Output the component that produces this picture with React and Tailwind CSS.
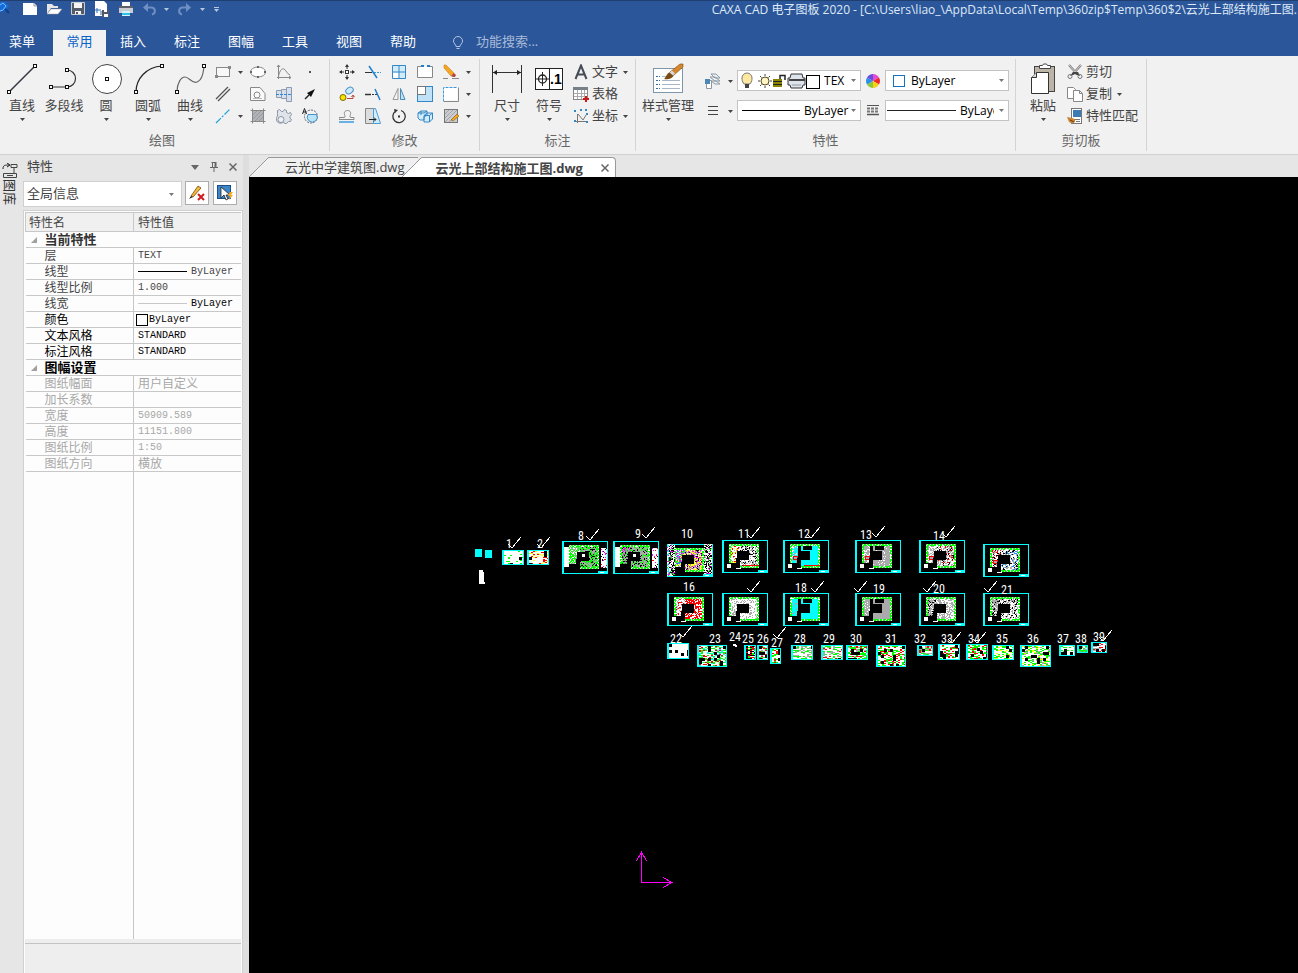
import React from 'react';

const uiFont = 'font-["Open_Sans","Noto_Sans_CJK_SC",sans-serif]';

/* ---------- Icons ---------- */

const Caret = ({ className = 'text-[#444]' }) => (
  <svg viewBox="0 0 5 3" className={`h-[3px] w-[5px] shrink-0 ${className}`} fill="currentColor" aria-hidden="true">
    <path d="M0 0h5L2.5 3z" />
  </svg>
);

const Icon = ({ children, className = 'size-4' }) => (
  <svg viewBox="0 0 16 16" fill="none" className={`shrink-0 ${className}`} aria-hidden="true">
    {children}
  </svg>
);

const BigIcon = ({ children }) => (
  <svg viewBox="0 0 32 32" fill="none" className="size-8 shrink-0" aria-hidden="true">
    {children}
  </svg>
);

const Node = ({ x, y }) => (
  <rect x={x - 1.5} y={y - 1.5} width="3" height="3" fill="#fff" stroke="#111" />
);

const big = {
  line: (
    <BigIcon>
      <path d="M3 29 29 3" stroke="#3c3c48" strokeWidth="1.6" />
      <Node x={3} y={29} />
      <Node x={29} y={3} />
    </BigIcon>
  ),
  polyline: (
    <BigIcon>
      <path d="M3 24h16a8.5 8.5 0 0 0 0-17" stroke="#333" strokeWidth="1.2" />
      <Node x={19} y={7} />
      <Node x={3} y={24} />
      <Node x={19} y={24} />
    </BigIcon>
  ),
  circle: (
    <BigIcon>
      <circle cx="17" cy="16" r="14.5" fill="#fff" stroke="#444" />
      <Node x={17} y={16} />
    </BigIcon>
  ),
  arc: (
    <BigIcon>
      <path d="M4 29C4 16 14 4 30 3" stroke="#222" strokeWidth="1.2" />
      <Node x={4} y={29} />
      <Node x={30} y={3} />
    </BigIcon>
  ),
  spline: (
    <BigIcon>
      <path d="M3 29C3 20 7 14 11 14s7 7 12 5 6-8 7-15" stroke="#666" strokeWidth="1.2" />
      <Node x={3} y={29} />
      <Node x={30} y={3} />
    </BigIcon>
  ),
  dimension: (
    <BigIcon>
      <path d="M1.500 2v28M30.500 2v28M2 9.500h28" stroke="#333" />
      <path d="M2 9.500l4-2.500v5zM30 9.500 26 7v5z" fill="#222" />
    </BigIcon>
  ),
  symbol: (
    <BigIcon>
      <rect x="2.500" y="5.500" width="27" height="21" fill="#fff" stroke="#222" />
      <path d="M16.500 5v22M3 16h13M9.500 9v14" stroke="#222" />
      <circle cx="9.500" cy="16" r="4" stroke="#222" strokeWidth="1.300" />
      <text x="17" y="21" className="font-['Liberation_Sans',sans-serif] text-[14px] font-bold" fill="#000">
        .1
      </text>
    </BigIcon>
  ),
  style: (
    <BigIcon>
      <rect x="1.500" y="5.500" width="29" height="24" fill="#fff" stroke="#7e96aa" />
      <path d="M4 13.500h4M4 17.500h4M4 21.500h4M4 25.500h4" stroke="#3a6ea5" strokeDasharray="2 1" />
      <path d="M10 13.500h6M10 17.500h18M10 21.500h18M10 25.500h18" stroke="#a9b6c6" />
      <path d="M12 16c2-1 2-5 6-7l4 3c-2 4-6 5-10 4z" fill="#7b4a14" />
      <path d="M18 9 28 1h3v3L22 12z" fill="#d9862a" stroke="#7b4a14" strokeWidth=".6" />
      <path d="M17.500 9.500l2.500-2 3 3-2 2z" fill="#d8d8d8" />
    </BigIcon>
  ),
  paste: (
    <BigIcon>
      <rect x="7.500" y="3.500" width="20" height="25" fill="#bdb4a8" stroke="#444" />
      <path d="M12.500 5.500v-3h3l1-1.500h3l1 1.500h3v3z" fill="#fff" stroke="#444" />
      <path d="M9.500 9.500h12v21h-17v-16z" fill="#fff" stroke="#333" />
      <path d="M9.500 9.500v5h-5" fill="#d8d8d8" stroke="#333" />
    </BigIcon>
  ),
};

const small = {
  rect: (
    <Icon>
      <rect x="1.500" y="3.500" width="13" height="9" fill="#f8f8f8" stroke="#888" />
      <path d="M0 11h3v3H0zM13 2h3v3h-3z" fill="#888" />
    </Icon>
  ),
  parallel: (
    <Icon>
      <path d="M1 13 13 1M3 15 15 3" stroke="#555" strokeWidth="1.300" />
    </Icon>
  ),
  centerLine: (
    <Icon>
      <path d="M1 15 15 1" stroke="#1fa3dc" strokeWidth="1.200" strokeDasharray="7 1.500 2 1.500" />
    </Icon>
  ),
  ellipse: (
    <Icon>
      <ellipse cx="8" cy="8" rx="7.500" ry="5" fill="#fff" stroke="#888" />
      <path d="M7 2h2v2H7zM7 12h2v2H7zM0 7h2v2H0zM14 7h2v2h-2z" fill="#666" />
    </Icon>
  ),
  profile: (
    <Icon>
      <path d="M1 1.500h9l5 6v7H.500v-13z" stroke="#888" fill="#fafafa" />
      <circle cx="7" cy="9" r="3" stroke="#888" />
      <path d="M3 12.500h9" stroke="#bbb" />
    </Icon>
  ),
  hatch: (
    <Icon>
      <rect x="3" y="3" width="10" height="10" fill="#b0b3b8" />
      <path d="M3 7l4-4M3 11l8-8M5 13l8-8M9 13l4-4" stroke="#999" />
      <path d="M.500 2.500h15M.500 13.500h15M2.500.500v15M13.500.500v15" stroke="#888" />
    </Icon>
  ),
  formula: (
    <Icon>
      <path d="M2.500 1v14M1 13.500h14" stroke="#888" />
      <path d="M2.500 12C4 6 6 4 8 5s3 5 6 6" stroke="#888" />
      <path d="M1 3l1.500-2L4 3M13 12l2 1.500-2 1.500" stroke="#888" />
    </Icon>
  ),
  shaft: (
    <Icon>
      <path d="M.500 4.500h5v7h-5zM5.500 3.500h5v9h-5zM10.500 1.500h5v14h-5z" fill="#d6dfec" stroke="#8d9bb0" />
      <path d="M0 8.500h16" stroke="#2f8ad8" strokeDasharray="3 1" />
    </Icon>
  ),
  gear: (
    <Icon>
      <path
        d="M1.500 5.500v-3l2-1 2 2 1.500 0 1.500-2 2 1v2l2 1 2-1 1 2-1.500 2v2l1.500 1-1 2-2 0-2 2h-2l-1-1.500A4 4 0 1 1 1.500 8z"
        fill="#dfe3ea"
        stroke="#8b95a5"
      />
      <circle cx="5" cy="11.500" r="3" fill="#f1f1f1" stroke="#8b95a5" />
    </Icon>
  ),
  point: (
    <Icon>
      <path d="M7 7h2v2H7z" fill="#555" />
    </Icon>
  ),
  arrow: (
    <Icon>
      <path d="M3 13l4-4" stroke="#222" strokeWidth="1.500" />
      <path d="M13 3 5 7l4 4z" fill="#111" />
    </Icon>
  ),
  detail: (
    <Icon>
      <circle cx="9" cy="8.500" r="6.500" stroke="#667" strokeDasharray="2 1" />
      <path d="M6 6.500h8.500a5 5 0 1 1-8.500 0z" fill="#b9e3fa" stroke="#4a90c2" />
      <path d="M.500 6 2.500.500 4.500 6M1.200 4h2.600" stroke="#222" />
    </Icon>
  ),
  move: (
    <Icon>
      <path d="M8 1v4M8 11v4M1 8h4M11 8h4" stroke="#333" />
      <path d="M8 0l2 3H6zM8 16l2-3H6zM0 8l3-2v4zM16 8l-3-2v4z" fill="#333" />
      <rect x="6.500" y="6.500" width="3" height="3" fill="#fff" stroke="#333" />
    </Icon>
  ),
  copy: (
    <Icon>
      <ellipse cx="10.500" cy="4.500" rx="4" ry="3" fill="#cdeafc" stroke="#4a90c2" transform="rotate(-35 10.500 4.500)" />
      <circle cx="4" cy="11.500" r="3" fill="#f5e400" stroke="#7a6b00" />
      <path d="M8 12.500h6V10M12.500 11l1.500-2 1.500 2" stroke="#b5483a" />
    </Icon>
  ),
  offset: (
    <Icon>
      <path d="M0 9.500h5c1.500 0 1-1.500.500-3s0-4 3-4 3.500 2.500 3 4-1 3 .500 3h3v2H0z" fill="#f4f4f4" stroke="#888" />
      <path d="M0 14h15" stroke="#3a9bdc" strokeWidth="1.500" />
    </Icon>
  ),
  trim: (
    <Icon>
      <path d="M0 8.500h7" stroke="#333" />
      <path d="M9 8.500h7" stroke="#3a9bdc" strokeDasharray="2 1" />
      <path d="M4 2l8 12" stroke="#1f7fd0" strokeWidth="1.500" />
    </Icon>
  ),
  extend: (
    <Icon>
      <path d="M0 8.500h6" stroke="#333" strokeWidth="1.500" />
      <path d="M7 8.500h5" stroke="#333" strokeDasharray="2 1" />
      <path d="M10 3l5 11" stroke="#1f7fd0" strokeWidth="1.500" />
    </Icon>
  ),
  stretch: (
    <Icon>
      <path d="M.500.500h8v15h-8z" fill="#ddd" stroke="#888" />
      <path d="M8.500.500h2l5 15h-7z" fill="#d3ecfb" stroke="#4a9fd8" />
      <path d="M4 11.500h7M9 9.500l2 2-2 2" stroke="#222" />
    </Icon>
  ),
  array: (
    <Icon>
      <path d="M1.500 1.500h13v13h-13z" fill="#d3ecfb" />
      <path d="M1.500 8.500h6v6h-6z" fill="#fff" />
      <path d="M1.500 1.500h13v13h-13zM8 1v14M1 8h14" stroke="#3487c4" />
    </Icon>
  ),
  mirror: (
    <Icon>
      <path d="M7 2.500v11H2z" stroke="#999" fill="#f5f5f5" />
      <path d="M9.500 2.500v11H14z" stroke="#4a8ab5" fill="#bfe2f8" />
    </Icon>
  ),
  rotate: (
    <Icon>
      <path d="M10 2.500A6.200 6.200 0 1 1 4.500 3.300" stroke="#333" strokeWidth="1.300" />
      <path d="M3 1l4 1-3 3z" fill="#333" />
      <path d="M7 7.500h2v2H7z" fill="#333" />
    </Icon>
  ),
  breakLine: (
    <Icon>
      <path d="M5 2.500H.500v11h15v-11H11" fill="#fff" stroke="#888" />
      <path d="M4 1h3v2H4zM10 1h3v2h-3z" fill="#1f7fd0" />
    </Icon>
  ),
  scale: (
    <Icon>
      <rect x=".500" y=".500" width="15" height="15" fill="#bfe2f8" stroke="#3487c4" />
      <rect x=".500" y=".500" width="8" height="8" fill="#fff" stroke="#777" />
    </Icon>
  ),
  explode: (
    <Icon>
      <path d="M1 5l3-2h6v4l-3 2v3H3L1 10zM7 7.500l3-2.500h5.500v6l-3 3H7z" fill="#d3ecfb" stroke="#3487c4" />
      <path d="M1 5h6l3-2M7 7.500h5.500l3-2.500M12.500 7.500v6.500M4 3v4" stroke="#3487c4" />
    </Icon>
  ),
  pencil: (
    <Icon>
      <path d="M1 1l2 0 8 8-3 3-7-8z" fill="#f5a623" stroke="#b87412" strokeWidth=".5" />
      <path d="M11 9l2 2-1 2-2 0-2-1z" fill="#b5483a" />
      <path d="M0 14.500h5M9 14.500h7" stroke="#888" />
    </Icon>
  ),
  region: (
    <Icon>
      <rect x=".500" y="1.500" width="14" height="13" fill="#fff" />
      <path d="M.500 15.500v-14h14" stroke="#3a9bdc" strokeDasharray="3 1" />
      <path d="M15.500 1.500v14H1" stroke="#888" />
    </Icon>
  ),
  hatchEdit: (
    <Icon>
      <rect x="1.500" y="1.500" width="13" height="13" fill="#c9ccd1" stroke="#777" />
      <path d="M2 6l4-4M2 10l8-8M2 14 14 2M6 14l8-8" stroke="#a0a3a8" />
      <path d="M8 12l6-6 2 2-6 5z" fill="#f5a623" stroke="#8a5a12" strokeWidth=".6" />
    </Icon>
  ),
  text: (
    <Icon>
      <path d="M2.500 15 8 1.500 13.500 15M4.500 10.500h7" stroke="#444c55" strokeWidth="2" />
    </Icon>
  ),
  table: (
    <Icon>
      <rect x=".500" y="1.500" width="14" height="12" fill="#fff" stroke="#888" />
      <path d="M0 1h15v3H0z" fill="#777f88" />
      <path d="M1 7.500h13M1 10.500h13M4.500 4v9M8.500 4v9M11.500 4v9" stroke="#aaa" />
      <path d="M13 10v6M10 13h6" stroke="#d01818" strokeWidth="2" />
    </Icon>
  ),
  coordinate: (
    <Icon>
      <path d="M4.500 6v9M2 13.500h12M5 6l5 6 3-5" stroke="#777" />
      <path d="M1 2h2v2H1zM7 1h2v2H7zM12 1h2v2h-2zM1 12h2v2H1zM13 5h2v2h-2zM13 13h2v2h-2z" fill="#3487c4" />
    </Icon>
  ),
  layers: (
    <Icon>
      <path d="M6 1h5l4 4h-5zM5 4h5l5 4h-5zM6 8h5l4 3h-5z" fill="#eef1f4" stroke="#8d98a5" />
      <path d="M1.500 7.500h5v8h-5z" fill="#fff" stroke="#8d98a5" />
      <path d="M0 6h5v5H0z" fill="#4f86b8" />
    </Icon>
  ),
  lines: (
    <Icon>
      <path d="M3 3.500h10M3 7.500h10M3 11.500h10" stroke="#444" strokeWidth="1.200" />
    </Icon>
  ),
  lineWidth: (
    <Icon>
      <path d="M2 2.500h12" stroke="#555" />
      <path d="M2 5.500h12M2 8.500h12" stroke="#777" strokeWidth="2" strokeDasharray="3 1" />
      <path d="M2 11.500h12" stroke="#555" strokeWidth="1.500" />
    </Icon>
  ),
  colorWheel: (
    <Icon>
      <path d="M8 8V1a7 7 0 0 1 6 3.500z" fill="#e34bd1" />
      <path d="M8 8l6-3.500a7 7 0 0 1 0 7z" fill="#f02a2a" />
      <path d="M8 8l6 3.500A7 7 0 0 1 8 15z" fill="#f7d214" />
      <path d="M8 8v7a7 7 0 0 1-6-3.500z" fill="#8fc93a" />
      <path d="M8 8l-6 3.500a7 7 0 0 1 0-7z" fill="#2b8fe8" />
      <path d="M8 8 2 4.500A7 7 0 0 1 8 1z" fill="#6a4be0" />
    </Icon>
  ),
  scissors: (
    <Icon>
      <path d="M2 1l8 9M14 1 6 10" stroke="#777" strokeWidth="2.200" />
      <path d="M2 1l8 9M14 1 6 10" stroke="#eee" strokeWidth=".8" />
      <path d="M6 8h5l2 4-3-1-2-1-2 1-3 1z" fill="#444" />
      <circle cx="3" cy="12.500" r="2" stroke="#777" />
      <circle cx="13" cy="12.500" r="2" stroke="#777" />
    </Icon>
  ),
  copyPage: (
    <Icon>
      <path d="M.500 1.500h6l2 2v9h-8z" fill="#fff" stroke="#888" />
      <path d="M6.500 4.500h6l3 3v8h-9z" fill="#fff" stroke="#888" />
      <path d="M12.500 4.500v3h3" stroke="#888" />
    </Icon>
  ),
  matchProps: (
    <Icon>
      <rect x="4.500" y=".500" width="10" height="15" fill="#fff" stroke="#777" />
      <rect x="6" y="2" width="8" height="7" fill="#3a7ab5" />
      <path d="M8 11.500h5M9 13.500h4" stroke="#777" />
      <path d="M0 9l5 1 3 1v3l-3 1.500-3-1.500z" fill="#c98435" />
      <path d="M3 12l4 2" stroke="#6d3f10" />
    </Icon>
  ),
};

/* ---------- Title bar ---------- */

const quickAccess = [
  {
    label: '新建',
    icon: (
      <Icon>
        <path d="M1 2h11l3 3v9H1z" fill="#fff" />
        <path d="M12 2v3h3" stroke="#999" />
      </Icon>
    ),
  },
  {
    label: '打开',
    icon: (
      <Icon>
        <path d="M1 3h5l2 2h4v2H5l-4 6z" fill="#e6e6e6" />
        <path d="M5 8h11l-4 5H1z" fill="#fff" stroke="#999" strokeWidth=".5" />
      </Icon>
    ),
  },
  {
    label: '保存',
    icon: (
      <Icon>
        <path d="M1.500 1.500h13v12h-13z" fill="#555b66" stroke="#c9ccd1" />
        <path d="M4 2h8v5H4zM5 10h6v3H5z" fill="#f4f4f4" />
        <path d="M6 11h2v2H6z" fill="#555b66" />
      </Icon>
    ),
  },
  {
    label: '另存为',
    icon: (
      <Icon>
        <path d="M2 0h8l3 3v12H1V0z" fill="#fff" />
        <path d="M1 9h6M3 7v5M7 10v4" stroke="#2b6cb8" />
        <path d="M8 9h7v7H8z" fill="#555b66" />
        <path d="M10 9h3v2h-3zM10 13h4v3h-4z" fill="#fff" />
      </Icon>
    ),
  },
  {
    label: '打印',
    icon: (
      <Icon>
        <path d="M4 1h8v5H4z" fill="#fff" />
        <path d="M1 5h14v7H1z" fill="#c9ccd1" />
        <path d="M1 5h14v2H1z" fill="#5d6269" />
        <path d="M4 10h8v5H4z" fill="#d6f2fb" />
        <path d="M4 12h8v2H4z" fill="#2fc1e6" />
      </Icon>
    ),
  },
  {
    label: '撤销',
    icon: (
      <Icon>
        <path d="M2 6.500h7c5 0 5 6 1 7" stroke="#6f8ec2" strokeWidth="2" />
        <path d="M1 6.500 6 2v9z" fill="#6f8ec2" />
      </Icon>
    ),
  },
];

const TitleBar = () => (
  <div className="flex h-[22px] items-start border-t border-[#1f3f70]">
    <svg viewBox="0 0 10 14" className="h-[14px] w-[10px] shrink-0" aria-hidden="true">
      <path d="M0 1h5l4 4-3 4-6 2z" fill="#1769d8" />
      <path d="M0 4l3-2 3 3-3 4-3 1" stroke="#6ec1ff" fill="none" />
      <path d="M5 8l4 4" stroke="#0b3f94" strokeWidth="2" />
    </svg>
    <div className="ml-2 flex shrink-0 items-center">
      {quickAccess.map((item) => (
        <button key={item.label} aria-label={item.label} className="flex w-6 justify-center">
          {item.icon}
        </button>
      ))}
      <button aria-label="撤销列表" className="flex w-2 justify-center">
        <Caret className="text-[#b8c6df]" />
      </button>
      <button aria-label="重做" className="flex w-7 justify-center">
        <Icon>
          <path d="M14 6.500H7c-5 0-5 6-1 7" stroke="#6f8ec2" strokeWidth="2" />
          <path d="M15 6.500 10 2v9z" fill="#6f8ec2" />
        </Icon>
      </button>
      <button aria-label="重做列表" className="flex w-2 justify-center">
        <Caret className="text-[#b8c6df]" />
      </button>
      <button aria-label="自定义" className="flex w-5 flex-col items-center gap-px">
        <span className="h-px w-[5px] bg-[#b8c6df]" />
        <Caret className="text-[#b8c6df]" />
      </button>
    </div>
    <h1 className="mt-px ml-auto pr-px text-[12px] leading-4 font-normal whitespace-nowrap text-[#dfe8f6]">
      {'CAXA CAD 电子图板 2020 - [C:\\Users\\liao_\\AppData\\Local\\Temp\\360zip$Temp\\360$2\\云光上部结构施工图.'}
    </h1>
  </div>
);

const menus = ['插入', '标注', '图幅', '工具', '视图', '帮助'];

const MenuBar = () => (
  <nav className="flex h-[34px] items-end text-[13px] text-white">
    <button className="mr-[9px] h-[26px] w-11 pb-0.5">菜单</button>
    <button className="h-[26px] w-[53px] bg-[#f1f1f1] pb-0.5 text-[#0a63c9]">常用</button>
    {menus.map((name) => (
      <button key={name} className="h-[26px] w-[54px] pb-0.5">
        {name}
      </button>
    ))}
    <label className="ml-5 flex h-[26px] items-center gap-[10px]">
      <Icon>
        <path d="M6 11.500C6 9.500 3.500 8.500 3.500 6a4.500 4.500 0 0 1 9 0c0 2.500-2.500 3.500-2.500 5.500zM6.500 13.500h3" stroke="#b6c5df" />
      </Icon>
      <input
        aria-label="功能搜索"
        placeholder="功能搜索..."
        className="w-28 bg-transparent pb-0.5 text-[13px] outline-none placeholder:text-[#a9bad8]"
      />
    </label>
  </nav>
);

/* ---------- Ribbon ---------- */

const Group = ({ title, className, children }) => (
  <section className={`flex shrink-0 flex-col border-r border-[#d4d4d4] ${className}`}>
    <div className="flex h-[71px] items-start">{children}</div>
    <h2 className="text-center text-[13px] leading-5 font-normal text-[#666]">{title}</h2>
  </section>
);

const BigButton = ({ icon, label, caret = true, className = 'w-[42px]' }) => (
  <button className={`flex flex-col items-center pt-1 whitespace-nowrap ${className}`}>
    {icon}
    <span className="text-[13px] leading-5">{label}</span>
    {caret && (
      <span className="flex h-2 items-center">
        <Caret />
      </span>
    )}
  </button>
);

const Tool = ({ name, label, caret, className = 'w-[26px] justify-center' }) => (
  <button aria-label={label} className={`flex h-[22px] items-center ${className}`}>
    {small[name]}
    {caret && <Caret />}
  </button>
);

const TextTool = ({ name, label, caret }) => (
  <button className="flex h-[22px] items-center gap-[3px] whitespace-nowrap">
    {small[name]}
    <span className="pb-0.5 text-[13px] leading-5">{label}</span>
    {caret && (
      <span className="pl-0.5">
        <Caret />
      </span>
    )}
  </button>
);

const Combo = ({ label, value, children, selectClass }) => (
  <div className="flex h-[21px] w-[124px] items-center border border-[#c3c3c3] bg-white pr-1">
    {children}
    <select aria-label={label} className={`min-w-0 appearance-none overflow-hidden text-[12px] leading-4 text-black outline-none ${selectClass}`}>
      <option>{value}</option>
    </select>
    <Caret className="ml-auto text-[#777]" />
  </div>
);

const Ribbon = () => (
  <div className="flex h-[99px] overflow-hidden border-b border-[#d0d0d0] bg-[#f1f1f1] py-[3px] text-[#444]">
    <Group title="绘图" className="w-[330px] pl-px pr-1.5">
      <BigButton icon={big.line} label="直线" />
      <BigButton icon={big.polyline} label="多段线" caret={false} />
      <BigButton icon={big.circle} label="圆" />
      <BigButton icon={big.arc} label="圆弧" />
      <BigButton icon={big.spline} label="曲线" />
      <div className="ml-1 grid grid-cols-[30px_26px_26px_26px] pt-0.5">
        <Tool name="rect" label="矩形" caret className="gap-[7px]" />
        <Tool name="ellipse" label="椭圆" />
        <Tool name="formula" label="公式曲线" />
        <Tool name="point" label="点" />
        <Tool name="parallel" label="平行线" className="" />
        <Tool name="profile" label="局部轮廓" />
        <Tool name="shaft" label="孔轴" />
        <Tool name="arrow" label="箭头" />
        <Tool name="centerLine" label="中心线" caret className="gap-[7px]" />
        <Tool name="hatch" label="剖面线" />
        <Tool name="gear" label="齿轮" />
        <Tool name="detail" label="局部放大图" />
      </div>
    </Group>

    <Group title="修改" className="w-[150px] px-1">
      <div className="grid grid-cols-[26px_26px_26px_26px_36px] pt-0.5">
        <Tool name="move" label="平移" />
        <Tool name="trim" label="裁剪" />
        <Tool name="array" label="阵列" />
        <Tool name="breakLine" label="打断" />
        <Tool name="pencil" label="删除" caret className="gap-[7px] pl-[5px]" />
        <Tool name="copy" label="平移复制" />
        <Tool name="extend" label="延伸" />
        <Tool name="mirror" label="镜像" />
        <Tool name="scale" label="缩放" />
        <Tool name="region" label="过渡" caret className="gap-[7px] pl-[5px]" />
        <Tool name="offset" label="等距线" />
        <Tool name="stretch" label="拉伸" />
        <Tool name="rotate" label="旋转" />
        <Tool name="explode" label="分解" />
        <Tool name="hatchEdit" label="编辑填充" caret className="gap-[7px] pl-[5px]" />
      </div>
    </Group>

    <Group title="标注" className="w-[156px] px-1.5">
      <BigButton icon={big.dimension} label="尺寸" />
      <BigButton icon={big.symbol} label="符号" />
      <div className="flex flex-col items-start pt-0.5 pl-[3px]">
        <TextTool name="text" label="文字" caret />
        <TextTool name="table" label="表格" />
        <TextTool name="coordinate" label="坐标" caret />
      </div>
    </Group>

    <Group title="特性" className="w-[380px] px-1.5">
      <BigButton icon={big.style} label="样式管理" className="w-14" />
      <div className="grid grid-cols-[32px_124px_24px_124px] gap-y-2 pt-[11px] pl-[11px]">
        <Tool name="layers" label="图层" caret className="gap-[7px]" />
        <Combo label="当前图层" value="TEX" selectClass="w-8 pl-1">
          <svg viewBox="0 0 82 18" className="h-[18px] w-[82px] shrink-0" fill="none" aria-hidden="true">
            <path d="M6 12C4 9 4 8 4 6a5 5 0 0 1 10 0c0 2 0 3-2 6z" fill="#ffe9a0" stroke="#777" />
            <path d="M7 12h4v4H7z" fill="#444" />
            <circle cx="27" cy="9" r="4" fill="#fff4c4" stroke="#5a4a20" />
            <path d="M27 2v2M27 14v2M20 9h2M32 9h2M22 4l1.500 1.500M30.500 12.500 32 14M22 14l1.500-1.500M30.500 5.500 32 4" stroke="#444" />
            <path d="M35 7h9v8h-9z" fill="#8a8400" />
            <path d="M35 9.500h9M35 12.500h9" stroke="#222" />
            <path d="M42 7V3.500h5V8" stroke="#222" strokeWidth="1.500" />
            <path d="M53 2h11l1 4h2v7h-2l-1 3H53l-1-3h-2V6h2z" fill="#dde4ee" stroke="#333" />
            <path d="M51 8h16" stroke="#444" strokeWidth="2" />
            <path d="M54 13h9" stroke="#999" />
            <rect x="68.500" y="3.500" width="13" height="13" fill="#fff" stroke="#000" />
          </svg>
        </Combo>
        <Tool name="colorWheel" label="颜色" className="justify-center" />
        <Combo label="颜色" value="ByLayer" selectClass="w-16 pl-1.5">
          <span className="ml-[7px] size-3 shrink-0 border border-[#1272c4]" />
        </Combo>
        <Tool name="lines" label="线型" caret className="gap-[7px]" />
        <Combo label="线型" value="ByLayer" selectClass="w-[50px] pl-1">
          <span className="ml-1 h-px w-[58px] shrink-0 bg-black" />
        </Combo>
        <Tool name="lineWidth" label="线宽" className="justify-center" />
        <Combo label="线宽" value="ByLayer" selectClass="w-[38px] pl-1">
          <span className="ml-px h-px w-[69px] shrink-0 bg-[#222]" />
        </Combo>
      </div>
    </Group>

    <Group title="剪切板" className="w-[131px] px-1.5">
      <BigButton icon={big.paste} label="粘贴" />
      <div className="flex flex-col items-start pt-0.5 pl-[3px]">
        <TextTool name="scissors" label="剪切" />
        <TextTool name="copyPage" label="复制" caret />
        <TextTool name="matchProps" label="特性匹配" />
      </div>
    </Group>
  </div>
);

/* ---------- Property panel ---------- */

const mono = 'font-["Liberation_Mono",monospace] text-[10px]';

const rows = [
  { section: '当前特性', tone: 'text-[#333]' },
  { name: '层', value: 'TEXT', tone: 'text-[#444]' },
  { name: '线型', value: 'ByLayer', line: 'bg-black', tone: 'text-[#444]' },
  { name: '线型比例', value: '1.000', tone: 'text-[#444]' },
  { name: '线宽', value: 'ByLayer', line: 'bg-[#c8c8c8]', tone: 'text-[#444]', valueTone: 'text-black' },
  { name: '颜色', value: 'ByLayer', swatch: true, tone: 'text-black' },
  { name: '文本风格', value: 'STANDARD', tone: 'text-black' },
  { name: '标注风格', value: 'STANDARD', tone: 'text-black' },
  { section: '图幅设置', tone: 'text-black' },
  { name: '图纸幅面', value: '用户自定义', cjk: true, tone: 'text-[#a8a8a8]' },
  { name: '加长系数', value: '', tone: 'text-[#a8a8a8]' },
  { name: '宽度', value: '50909.589', tone: 'text-[#a8a8a8]' },
  { name: '高度', value: '11151.800', tone: 'text-[#a8a8a8]' },
  { name: '图纸比例', value: '1:50', tone: 'text-[#a8a8a8]' },
  { name: '图纸方向', value: '横放', cjk: true, tone: 'text-[#a8a8a8]' },
];

const PropertyTable = () => (
  <table className="w-full table-fixed border-collapse text-left text-[12px] leading-[15px]">
    <colgroup>
      <col className="w-[108px]" />
      <col />
    </colgroup>
    <thead>
      <tr className="h-[19px] bg-[#f0f0f0] text-[#444]">
        <th className="border border-[#c8c8c8] p-0 pl-[3px] font-normal">特性名</th>
        <th className="border border-r-0 border-[#c8c8c8] p-0 pl-1 font-normal">特性值</th>
      </tr>
    </thead>
    <tbody>
      {rows.map((row) =>
        row.section ? (
          <tr key={row.section} className="h-4 border-b border-[#c8c8c8]">
            <th colSpan={2} className={`p-0 text-[13px] font-bold ${row.tone}`}>
              <span className="flex items-center gap-2 pl-[5px]">
                <svg viewBox="0 0 6 6" className="size-1.5" fill="#a0a0a0" aria-hidden="true">
                  <path d="M6 0v6H0z" />
                </svg>
                {row.section}
              </span>
            </th>
          </tr>
        ) : (
          <tr key={row.name} className={`h-4 border-b border-[#c8c8c8] ${row.tone}`}>
            <td className="border-r border-[#c8c8c8] p-0 pl-[19px]">{row.name}</td>
            <td className={`p-0 ${row.valueTone || ''}`}>
              <span className={`flex items-center ${row.swatch ? 'gap-px pl-0.5' : 'gap-1 pl-1'}`}>
                {row.line && <span className={`h-px w-[49px] ${row.line}`} />}
                {row.swatch && <span className="size-3 border border-black" />}
                <span className={row.cjk ? '' : mono}>{row.value}</span>
              </span>
            </td>
          </tr>
        )
      )}
    </tbody>
  </table>
);

const PropertyPanel = () => (
  <aside className="flex w-[220px] shrink-0 flex-col">
    <div className="flex h-[22px] items-center pl-1 text-[#666]">
      <h2 className="text-[13px] leading-5 font-normal text-[#444]">特性</h2>
      <div className="ml-auto flex items-center gap-0.5 pt-0.5 pr-0.5">
        <button aria-label="选项" className="flex w-[17px] justify-center">
          <svg viewBox="0 0 8 5" className="h-[5px] w-2" fill="#666">
            <path d="M0 0h8L4 5z" />
          </svg>
        </button>
        <button aria-label="固定" className="flex w-[17px] justify-center">
          <svg viewBox="0 0 8 10" className="h-[10px] w-2" fill="none" stroke="#666">
            <path d="M2.500 0v5.500M1.500.500h4M0 5.500h8M4 6v4" />
            <path d="M5.500 0v5.500" strokeWidth="2" />
          </svg>
        </button>
        <button aria-label="关闭" className="flex w-[17px] justify-center">
          <svg viewBox="0 0 8 8" className="size-2" stroke="#666" strokeWidth="1.500">
            <path d="M.500.500l7 7M7.500.500l-7 7" />
          </svg>
        </button>
      </div>
    </div>

    <div className="mt-1 flex gap-[3px]">
      <div className="flex h-[26px] w-[159px] items-center border border-[#d0d0d0] bg-white pr-[7px] pl-[3px]">
        <select aria-label="对象" className="min-w-0 flex-1 appearance-none pb-0.5 text-[13px] leading-5 text-[#444] outline-none">
          <option>全局信息</option>
        </select>
        <Caret className="text-[#777]" />
      </div>
      <button aria-label="清除" className="mr-px flex size-6 items-center justify-center border border-[#adadad] bg-white">
        <Icon>
          <path d="M2 11 9 1l3 2-8 9z" fill="#f5b93a" stroke="#6d4a12" strokeWidth=".8" />
          <path d="M0 14l2-3 2 1z" fill="#222" />
          <path d="M9 9l6 6M15 9l-6 6" stroke="#d11a1a" strokeWidth="2" />
        </Icon>
      </button>
      <button aria-label="快速选择" className="flex size-6 items-center justify-center border border-[#adadad] bg-white">
        <Icon>
          <rect x=".500" y=".500" width="13" height="13" fill="#3c86c8" stroke="#1c4f86" />
          <path d="M4 2v11l3-3 2 5 2-1-2-4h4z" fill="#fff" stroke="#222" strokeWidth=".8" />
          <path d="M13 7l-2 4h2l-1 4 4-5h-2l2-3z" fill="#f7a81b" />
        </Icon>
      </button>
    </div>

    <div className="mt-[3px] flex flex-1 flex-col border-x border-t border-[#d0d0d0] bg-[#fdfdfd] px-px pt-px">
      <PropertyTable />
      <div className="grid flex-1 grid-cols-[109px_1fr]">
        <div className="border-r border-[#c8c8c8]" />
        <div />
      </div>
      <div className="h-[34px] bg-[#eee] pt-1">
        <div className="border-t border-[#c3c3c3]" />
      </div>
    </div>
  </aside>
);

/* ---------- Document tabs ---------- */

const Slope = ({ fill }) => (
  <svg viewBox="0 0 20 20" className="h-5 w-5 shrink-0" aria-hidden="true">
    <path d="M0 20 18 2q1-1.500 2-1.500V20z" fill={fill} />
    <path d="M0 20 18 2q1-1.500 2-1.500" fill="none" stroke="#999" />
  </svg>
);

const DocTabs = () => (
  <div className="flex h-[22px] items-end bg-[#e6e6e6] text-[13px] text-[#444]">
    <button className="flex">
      <Slope fill="#f0f0f0" />
      <span className="h-5 border-t border-[#999] bg-[#f0f0f0] pr-[13px] pl-4 leading-[18px]">云光中学建筑图.dwg</span>
    </button>
    <div className="-ml-4 flex font-bold">
      <Slope fill="#fff" />
      <button className="h-5 border-t border-[#999] bg-white pl-[14px] leading-[18px]">云光上部结构施工图.dwg</button>
      <button aria-label="关闭文件" className="flex h-5 items-center rounded-tr-sm border-t border-r border-[#999] bg-white pr-1.5 pl-[18px]">
        <svg viewBox="0 0 8 8" className="size-2" stroke="#666" strokeWidth="1.500">
          <path d="M.500.500l7 7M7.500.500l-7 7" />
        </svg>
      </button>
    </div>
  </div>
);

/* ---------- Drawing canvas ---------- */

const C = '#00ffff';
const G = '#00ff00';
const W = '#ffffff';
const A = '#aaaaaa';
const R = '#ff0000';
const M = '#ff00ff';
const Y = '#ffff00';
const K = '#000000';
const B = '#2090ff';

const noise = (x, y, seed) => {
  const n = Math.sin(x * 12.9898 + y * 78.233 + seed * 37.719) * 43758.5453;
  return n - Math.floor(n);
};

const pick = (list, n) => list[Math.floor(n * list.length)];

// One path per colour keeps the node count low
const Pixels = ({ x, y, w, h, colorAt }) => {
  const paths = {};
  for (let j = 0; j < h; j++) {
    for (let i = 0; i < w; i++) {
      const color = colorAt(i, j);
      if (color && color !== K) paths[color] = `${paths[color] || ''}M${x + i} ${y + j}h1v1h-1z`;
    }
  }
  return Object.entries(paths).map(([color, d]) => <path key={color} d={d} fill={color} />);
};

const Frame = ({ x, y, w, h }) => (
  <path d={`M${x} ${y}h${w}v${h}h${-w}zM${x + 2} ${y + 1}v${h - 2}h${w - 3}v${2 - h}z`} fill={C} fillRule="evenodd" />
);

const inBuilding = (i, j, notch) => {
  if (i < 7 || i > 36 || j < 4 || j > 27) return false;
  if (i < 18 && j > 22) return false;
  if (i > 14 && i < 27 && j > 10 && j < 20) return false;
  if (i > 13 && i < 18 && j > 17) return false;
  if (notch && i > 14 && i < 18 && j > 5 && j < 12) return false;
  if (notch && i > 19 && i < 29 && j > 5 && j < 10) return false;
  return true;
};

const Plan = ({ x, y, body, left = body, seed, notch, box, bottom, sides, dense }) => {
  const colorAt = (i, j) => {
    const n = noise(i, j, seed);
    if (dense && (i < 8 || i > 36)) return n > 0.35 ? pick([W, W, W, M, W, G], noise(j, i, seed)) : K;
    if (sides && ((i > 1 && i < 7 && j > 5 && j < 26) || (i > 38 && j > 6 && j < 27))) {
      return i > 38 && n > 0.8 ? pick([M, R, K], noise(j, i, seed)) : W;
    }
    if (sides && i > 19 && i < 23 && j > 12 && j < 16) return W;
    if (!inBuilding(i, j, notch)) return K;
    if (box && i > 9 && i < 15 && j > 15 && j < 20) {
      return i === 10 || i === 14 || j === 16 || j === 19 ? R : A;
    }
    if (bottom && j === 25 && i > 20) return R;
    const outer = i === 7 || i === 36 || j === 4 || j === 27;
    if (outer) return (i + j) % 3 ? G : W;
    if (i === 8 || i === 35 || j === 5 || j === 26) return n > 0.25 ? G : W;
    return pick(i < 18 ? left : body, n);
  };
  return (
    <g>
      <Frame x={x} y={y} w={46} h={33} />
      <Pixels x={x} y={y} w={45} h={32} colorAt={colorAt} />
      {!sides && !dense && <path d={`M${x + 5} ${y + 24}h4v4h-4zM${x + 14} ${y + 28}h5v1h-5z`} fill={W} />}
      <path d={`M${x + 36} ${y + 30}h9v2h-9z`} fill={C} />
      <path d={`M${x + 38} ${y + 31}h4v1h-4z`} fill={W} />
    </g>
  );
};

const plans = [
  { x: 562, y: 541, seed: 1, body: [G, A, A, K, G], left: [G, W, G, A], sides: true },
  { x: 613, y: 541, seed: 2, body: [A, A, G, A, K], left: [G, A, A, M, K], sides: true },
  { x: 667, y: 544, seed: 3, body: [A, Y, W, M, A, Y, K], left: [W, G, M, A, B, Y], dense: true },
  { x: 722, y: 540, seed: 4, body: [W, A, A, W, W, K], left: [W, W, W, A, W, R, Y], bottom: true },
  { x: 783, y: 540, seed: 5, body: [C], left: [C, C, C, A, W], notch: true, box: true, bottom: true },
  { x: 855, y: 540, seed: 6, body: [A, A, A, A, A, A, A, W], left: [A, A, A, W], notch: true, box: true },
  { x: 919, y: 540, seed: 7, body: [W, A, W, A, W, A, K, R], left: [W, A, A, W], box: true },
  { x: 983, y: 544, seed: 8, body: [W, A, W, A, K, W, B], left: [W, W, A, R, K], box: true },
  { x: 667, y: 593, seed: 9, body: [R, W, R, R, W], left: [W, W, A, R, W] },
  { x: 722, y: 593, seed: 10, body: [W, A, W, W], left: [A, W, A, W, W] },
  { x: 783, y: 593, seed: 11, body: [C], left: [C, C, C, C, A], notch: true },
  { x: 855, y: 593, seed: 12, body: [A], left: [A, A, A, A, A, W], notch: true },
  { x: 919, y: 593, seed: 13, body: [W, A, W, A], left: [A, A, A, W, K] },
  { x: 983, y: 593, seed: 14, body: [W, A, K, W, A, W], left: [A, A, K, W, A] },
];

const mixed = [W, W, G, G, W, W, R, A, W];
const details = [
  { x: 502, y: 550, w: 22, h: 15, palette: [W, W, W, W, W, W, W, G] },
  { x: 527, y: 550, w: 22, h: 15, palette: [W, W, W, W, W, Y, R] },
  { x: 667, y: 643, w: 22, h: 16, palette: [W] },
  { x: 697, y: 645, w: 30, h: 22, palette: [W, W, G, W, C, G, R, W] },
  { x: 744, y: 645, w: 12, h: 15, palette: [R, G, K, K, W] },
  { x: 757, y: 645, w: 11, h: 15, palette: [G, A, M, R, W, W] },
  { x: 770, y: 648, w: 11, h: 16, palette: [W, W, W, R, G] },
  { x: 791, y: 645, w: 22, h: 15, palette: [W, G, W, A, A, W, W, G] },
  { x: 821, y: 645, w: 22, h: 15, palette: mixed },
  { x: 846, y: 645, w: 22, h: 15, palette: [W, G, A, W, W, G, R] },
  { x: 876, y: 645, w: 30, h: 22, palette: [W, G, R, W, G, W] },
  { x: 917, y: 645, w: 16, h: 11, palette: [W, R, G, A, W] },
  { x: 938, y: 644, w: 22, h: 16, palette: [W, W, W, W, G, R] },
  { x: 966, y: 644, w: 22, h: 16, palette: [W, W, W, G, G, R] },
  { x: 992, y: 645, w: 22, h: 15, palette: [W, G, W, Y, G, W, W] },
  { x: 1020, y: 645, w: 31, h: 22, palette: [W, G, G, W, W, Y, W, A] },
  { x: 1059, y: 645, w: 16, h: 11, palette: [W, W, W, G] },
  { x: 1077, y: 645, w: 11, h: 8, palette: [G, W, A, G] },
  { x: 1091, y: 642, w: 16, h: 11, palette: [W, W, W, A, R] },
];

// label, centre x, baseline y
const labels = [
  ['1', 509, 548], ['2', 540, 548], ['8', 581, 540], ['9', 638, 538], ['10', 687, 538],
  ['11', 744, 538], ['12', 804, 538], ['13', 866, 539], ['14', 939, 540],
  ['16', 689, 591], ['18', 801, 592], ['19', 879, 593], ['20', 939, 593], ['21', 1007, 594],
  ['22', 676, 643], ['23', 715, 643], ['24', 735, 641], ['25', 748, 643], ['26', 763, 643],
  ['27', 777, 647], ['28', 800, 643], ['29', 829, 643], ['30', 856, 643], ['31', 891, 643],
  ['32', 920, 643], ['33', 947, 643], ['34', 974, 643], ['35', 1002, 643], ['36', 1033, 643],
  ['37', 1063, 643], ['38', 1081, 643], ['39', 1099, 641],
];

const checks = [
  [512, 548], [541, 548], [590, 540], [646, 538], [751, 538], [811, 538], [876, 537], [946, 537],
  [751, 592], [815, 592], [858, 592], [927, 592], [988, 592], [683, 637], [777, 638], [952, 643],
  [977, 643], [1103, 641],
];

const Canvas = () => (
  <div className="flex-1 overflow-hidden bg-black">
    <svg viewBox="249 177 1049 796" className="block w-full" shapeRendering="crispEdges" role="img" aria-label="图纸">
      <path d="M475 549h7v8h-7zM485 550h7v8h-7z" fill={C} />
      <path d="M479 570h4v2h1v10h1v2h-6z" fill={W} />
      {plans.map((plan) => (
        <Plan key={plan.seed} {...plan} />
      ))}
      {details.map(({ x, y, w, h, palette }, s) => (
        <g key={x}>
          <Frame x={x} y={y} w={w} h={h} />
          <Pixels
            x={x + 2}
            y={y + 1}
            w={w - 3}
            h={h - 2}
            colorAt={(i, j) =>
              noise(Math.floor(i / 3), Math.floor(j / 3), s + 50) < 0.2
                ? K
                : pick(palette, noise(Math.floor(i / 2), j, s + 80))
            }
          />
        </g>
      ))}
      <path d="M733 644h3v1h1v2h-2v-1h-2z" fill={W} />
      <path d={checks.map(([x, y]) => `M${x - 4} ${y - 4}l4 4 9-11`).join('')} fill="none" stroke={W} />
      <g fill={W} textAnchor="middle" className="font-['Roboto_Condensed','Roboto',sans-serif] text-[12px]">
        {labels.map(([text, x, y]) => (
          <text key={text} x={x} y={y}>
            {text}
          </text>
        ))}
      </g>
      <path d="M641.500 853v29.500H672M636.500 861l5-9 5 9M663 877.500l9 5-9 5" fill="none" stroke={M} />
    </svg>
  </div>
);

const App = () => {
  return (
    <div className={`flex min-h-screen flex-col overflow-hidden bg-[#e6e6e6] ${uiFont}`}>
      <header className="bg-[#2b579a]">
        <TitleBar />
        <MenuBar />
      </header>
      <Ribbon />
      <main className="flex flex-1">
        {/* Collapsed library tab */}
        <div className="w-[23px] shrink-0 pt-2">
          <button className="flex w-5 flex-col items-center text-[13px] leading-4 text-[#333]">
            <Icon>
              <path d="M1 6c0-4 2-4 6-4M5 0l3 2-3 2" stroke="#222" />
              <path d="M9 1.500h6v3H9zM12 5v5" stroke="#444" />
              <path d="M1.500 10.500h13v4h-13zM5 12.500h6" stroke="#444" />
            </Icon>
            <span className="[text-orientation:sideways] [writing-mode:vertical-rl]">图库</span>
          </button>
        </div>
        <PropertyPanel />
        <div className="flex min-w-0 flex-1 flex-col border-l-6 border-[#dedede]">
          <DocTabs />
          <Canvas />
        </div>
      </main>
    </div>
  );
};

export default App;
